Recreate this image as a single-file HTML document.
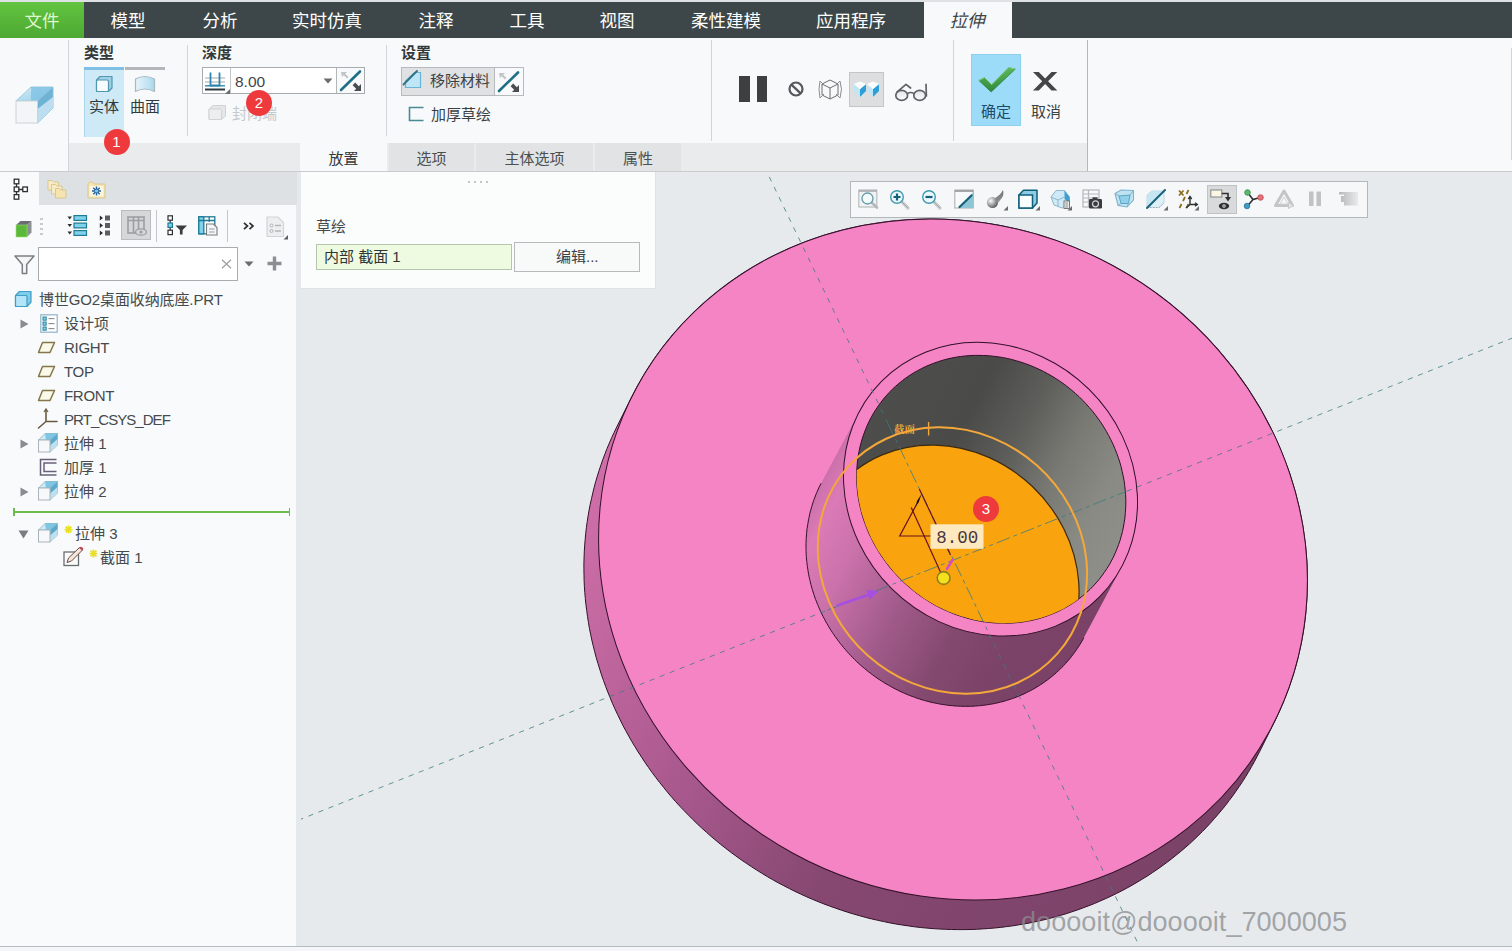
<!DOCTYPE html>
<html lang="zh-CN"><head><meta charset="utf-8"><title>拉伸</title>
<style>

html,body{margin:0;padding:0}
body{width:1512px;height:951px;position:relative;overflow:hidden;background:#f6f8f9;font-family:"Liberation Sans","Noto Sans CJK SC",sans-serif;color:#3f4547;font-size:15px}
.abs,.t,.i{position:absolute}
.t{white-space:nowrap;line-height:20px;height:20px}
#gfx{position:absolute;left:297px;top:172px;width:1215px;height:774px;background:#e7eaed}
#topstrip{left:0;top:0;width:1512px;height:2px;background:#dfe2e4}
#menubar{left:0;top:2px;width:1512px;height:36px;background:#3d4749}
#filetab{left:0;top:2px;width:84px;height:36px;background:linear-gradient(#62c440,#4da832)}
.mi{position:absolute;top:10.5px;height:20px;line-height:20px;font-size:17.5px;color:#fff;white-space:nowrap;transform:translateX(-50%)}
#acttab{left:924px;top:2px;width:88px;height:37px;background:#f7f9fa}
#ribbon{left:0;top:38px;width:1512px;height:134px;background:#f7f9fa}
#ribbonline{left:0;top:171px;width:1512px;height:1px;background:#c9cccd}
.vsep{position:absolute;width:1px;background:#d3d6d8}
#tabstrip{left:69px;top:143px;width:1018px;height:28px;background:#e9ebec}
.tab{position:absolute;top:143px;height:28px;background:#e1e3e4;font-size:15px;line-height:32px;text-align:center;color:#4a4f52}
.glabel{position:absolute;font-size:15px;font-weight:bold;color:#33393b;line-height:18px;white-space:nowrap}
.badge{position:absolute;width:26px;height:26px;border-radius:50%;background:#ee3a3c;color:#fff;font-size:15px;line-height:26px;text-align:center}

</style></head>
<body>
<div id="gfx"></div>
<svg id="scene" width="1212" height="774" viewBox="300 172 1212 774" style="position:absolute;left:300px;top:172px">
<defs>
<linearGradient id="gside" gradientUnits="userSpaceOnUse" x1="622" y1="417" x2="1254" y2="761"><stop offset="0" stop-color="#cf6fa9"/><stop offset="0.12" stop-color="#c2679f"/><stop offset="0.35" stop-color="#a4568a"/><stop offset="0.55" stop-color="#864871"/><stop offset="1" stop-color="#7b4267"/></linearGradient>
<linearGradient id="gtube" gradientUnits="userSpaceOnUse" x1="818" y1="486" x2="1088" y2="633"><stop offset="0" stop-color="#cb70aa"/><stop offset="0.07" stop-color="#db7ab6"/><stop offset="0.2" stop-color="#cb72ab"/><stop offset="0.42" stop-color="#a05a8a"/><stop offset="0.62" stop-color="#84496f"/><stop offset="0.8" stop-color="#7b4367"/><stop offset="1" stop-color="#7a4267"/></linearGradient>
<linearGradient id="ghole" gradientUnits="userSpaceOnUse" x1="868" y1="422" x2="1115" y2="557"><stop offset="0" stop-color="#4d4d4b"/><stop offset="0.3" stop-color="#4a4a48"/><stop offset="0.5" stop-color="#5e5e5b"/><stop offset="0.68" stop-color="#7a7a75"/><stop offset="0.85" stop-color="#8a8a84"/><stop offset="1" stop-color="#8f8f89"/></linearGradient>
<clipPath id="chole"><ellipse cx="991.2" cy="489.3" rx="140.6" ry="127.6" transform="rotate(43.57 991.2 489.3)" /></clipPath>
</defs>
<path d="M583.9,568.8 L583.9,562.9 L584.1,557.0 L584.3,551.1 L584.7,545.2 L585.2,539.3 L585.7,533.4 L586.4,527.6 L587.2,521.7 L588.1,515.9 L589.1,510.1 L590.2,504.4 L591.5,498.6 L592.8,492.9 L594.2,487.2 L595.7,481.6 L597.4,475.9 L599.1,470.4 L601.0,464.8 L602.9,459.3 L605.0,453.8 L607.1,448.4 L609.4,443.0 L611.7,437.6 L614.2,432.3 L616.7,427.1 L631.4,397.5 L634.1,392.3 L636.8,387.1 L639.7,382.0 L642.6,377.0 L645.6,372.0 L648.7,367.1 L652.0,362.2 L655.3,357.4 L658.7,352.6 L662.2,348.0 L665.7,343.3 L669.4,338.8 L673.2,334.3 L677.0,329.9 L680.9,325.5 L684.9,321.2 L689.0,317.0 L693.2,312.9 L697.4,308.8 L701.7,304.8 L706.2,300.9 L710.6,297.1 L715.2,293.4 L719.8,289.7 L724.5,286.1 L729.3,282.6 L734.1,279.2 L739.0,275.9 L743.9,272.6 L749.0,269.5 L754.1,266.4 L759.2,263.4 L764.4,260.5 L769.7,257.7 L775.0,255.0 L780.4,252.4 L785.8,249.9 L791.3,247.5 L796.8,245.1 L802.4,242.9 L808.0,240.8 L813.7,238.7 L819.4,236.8 L825.1,234.9 L830.9,233.2 L836.7,231.5 L842.6,230.0 L848.5,228.5 L854.4,227.2 L860.4,225.9 L866.4,224.8 L872.4,223.8 L878.4,222.8 L884.5,222.0 L890.6,221.2 L896.6,220.6 L902.8,220.1 L908.9,219.7 L915.0,219.3 L921.2,219.1 L927.4,219.0 L933.5,219.0 L939.7,219.1 L945.9,219.3 L952.1,219.6 L958.3,220.0 L964.4,220.5 L970.6,221.1 L976.8,221.8 L983.0,222.7 L989.1,223.6 L995.3,224.6 L1001.4,225.7 L1007.5,227.0 L1013.6,228.3 L1019.7,229.7 L1025.8,231.2 L1031.8,232.9 L1037.8,234.6 L1043.8,236.4 L1049.8,238.4 L1055.7,240.4 L1061.6,242.5 L1067.5,244.7 L1073.3,247.0 L1079.1,249.4 L1084.9,251.9 L1090.6,254.5 L1096.3,257.2 L1101.9,260.0 L1107.5,262.9 L1113.1,265.8 L1118.6,268.9 L1124.0,272.0 L1129.4,275.3 L1134.7,278.6 L1140.0,282.0 L1145.2,285.5 L1150.4,289.0 L1155.5,292.7 L1160.6,296.4 L1165.5,300.2 L1170.5,304.1 L1175.3,308.1 L1180.1,312.1 L1184.8,316.3 L1189.5,320.5 L1194.0,324.7 L1198.5,329.1 L1202.9,333.5 L1207.3,338.0 L1211.6,342.5 L1215.8,347.1 L1219.9,351.8 L1223.9,356.5 L1227.8,361.3 L1231.7,366.2 L1235.5,371.1 L1239.2,376.1 L1242.8,381.1 L1246.3,386.2 L1249.7,391.4 L1253.1,396.6 L1256.3,401.8 L1259.5,407.1 L1262.5,412.4 L1265.5,417.8 L1268.4,423.2 L1271.1,428.7 L1273.8,434.2 L1276.4,439.8 L1278.9,445.3 L1281.2,451.0 L1283.5,456.6 L1285.7,462.3 L1287.8,468.0 L1289.8,473.7 L1291.6,479.5 L1293.4,485.3 L1295.1,491.1 L1296.6,496.9 L1298.1,502.8 L1299.5,508.6 L1300.7,514.5 L1301.9,520.4 L1302.9,526.3 L1303.8,532.3 L1304.6,538.2 L1305.4,544.1 L1306.0,550.1 L1306.5,556.0 L1306.9,561.9 L1307.2,567.9 L1307.3,573.8 L1307.4,579.8 L1307.4,585.7 L1307.2,591.6 L1307.0,597.5 L1306.6,603.4 L1306.1,609.3 L1305.6,615.2 L1304.9,621.0 L1304.1,626.9 L1303.2,632.7 L1302.2,638.5 L1301.1,644.2 L1299.8,650.0 L1298.5,655.7 L1297.1,661.4 L1295.6,667.0 L1293.9,672.7 L1292.2,678.2 L1290.3,683.8 L1288.4,689.3 L1286.3,694.8 L1284.2,700.2 L1281.9,705.6 L1279.6,711.0 L1277.1,716.3 L1274.6,721.5 L1259.9,751.1 L1257.2,756.3 L1254.5,761.5 L1251.6,766.6 L1248.7,771.6 L1245.7,776.6 L1242.6,781.5 L1239.3,786.4 L1236.0,791.2 L1232.6,796.0 L1229.1,800.6 L1225.6,805.3 L1221.9,809.8 L1218.1,814.3 L1214.3,818.7 L1210.4,823.1 L1206.4,827.4 L1202.3,831.6 L1198.1,835.7 L1193.9,839.8 L1189.6,843.8 L1185.1,847.7 L1180.7,851.5 L1176.1,855.2 L1171.5,858.9 L1166.8,862.5 L1162.0,866.0 L1157.2,869.4 L1152.3,872.7 L1147.4,876.0 L1142.3,879.1 L1137.2,882.2 L1132.1,885.2 L1126.9,888.1 L1121.6,890.9 L1116.3,893.6 L1110.9,896.2 L1105.5,898.7 L1100.0,901.1 L1094.5,903.5 L1088.9,905.7 L1083.3,907.8 L1077.6,909.9 L1071.9,911.8 L1066.2,913.7 L1060.4,915.4 L1054.6,917.1 L1048.7,918.6 L1042.8,920.1 L1036.9,921.4 L1030.9,922.7 L1024.9,923.8 L1018.9,924.8 L1012.9,925.8 L1006.8,926.6 L1000.7,927.4 L994.7,928.0 L988.5,928.5 L982.4,928.9 L976.3,929.3 L970.1,929.5 L963.9,929.6 L957.8,929.6 L951.6,929.5 L945.4,929.3 L939.2,929.0 L933.0,928.6 L926.9,928.1 L920.7,927.5 L914.5,926.8 L908.3,925.9 L902.2,925.0 L896.0,924.0 L889.9,922.9 L883.8,921.6 L877.7,920.3 L871.6,918.9 L865.5,917.4 L859.5,915.7 L853.5,914.0 L847.5,912.2 L841.5,910.2 L835.6,908.2 L829.7,906.1 L823.8,903.9 L818.0,901.6 L812.2,899.2 L806.4,896.7 L800.7,894.1 L795.0,891.4 L789.4,888.6 L783.8,885.7 L778.2,882.8 L772.7,879.7 L767.3,876.6 L761.9,873.3 L756.6,870.0 L751.3,866.6 L746.1,863.1 L740.9,859.6 L735.8,855.9 L730.7,852.2 L725.8,848.4 L720.8,844.5 L716.0,840.5 L711.2,836.5 L706.5,832.3 L701.8,828.1 L697.3,823.9 L692.8,819.5 L688.4,815.1 L684.0,810.6 L679.7,806.1 L675.5,801.5 L671.4,796.8 L667.4,792.1 L663.5,787.3 L659.6,782.4 L655.8,777.5 L652.1,772.5 L648.5,767.5 L645.0,762.4 L641.6,757.2 L638.2,752.0 L635.0,746.8 L631.8,741.5 L628.8,736.2 L625.8,730.8 L622.9,725.4 L620.2,719.9 L617.5,714.4 L614.9,708.8 L612.4,703.3 L610.1,697.6 L607.8,692.0 L605.6,686.3 L603.5,680.6 L601.5,674.9 L599.7,669.1 L597.9,663.3 L596.2,657.5 L594.7,651.7 L593.2,645.8 L591.8,640.0 L590.6,634.1 L589.4,628.2 L588.4,622.3 L587.5,616.3 L586.7,610.4 L585.9,604.5 L585.3,598.5 L584.8,592.6 L584.4,586.7 L584.1,580.7 L584.0,574.8Z" fill="url(#gside)" stroke="#33102a" stroke-width="1"/>
<ellipse cx="953.0" cy="559.5" rx="360.1" ry="334.5" transform="rotate(28.59 953.0 559.5)" fill="#f584c4" stroke="#33102a" stroke-width="1"/>
<path d="M806.0,546.2 L806.0,543.6 L806.1,541.1 L806.2,538.5 L806.4,536.0 L806.6,533.5 L806.8,531.0 L807.1,528.4 L807.5,525.9 L807.9,523.5 L808.3,521.0 L808.8,518.5 L809.3,516.1 L809.8,513.6 L810.4,511.2 L811.1,508.8 L811.8,506.4 L812.5,504.0 L813.3,501.6 L814.1,499.3 L815.0,497.0 L815.9,494.6 L816.8,492.4 L817.8,490.1 L818.8,487.8 L819.9,485.6 L821.0,483.4 L822.2,481.2 L859.7,410.9 L860.9,408.8 L862.1,406.6 L863.4,404.5 L864.7,402.5 L866.0,400.4 L867.4,398.4 L868.8,396.4 L870.3,394.4 L871.8,392.5 L873.3,390.5 L874.9,388.7 L876.5,386.8 L878.1,385.0 L879.8,383.2 L881.5,381.4 L883.2,379.7 L885.0,378.0 L886.8,376.4 L888.6,374.7 L890.5,373.2 L892.4,371.6 L894.3,370.1 L896.3,368.6 L898.3,367.2 L900.3,365.8 L902.3,364.4 L904.4,363.1 L906.5,361.8 L908.6,360.5 L910.7,359.3 L912.9,358.1 L915.1,357.0 L917.3,355.9 L919.5,354.8 L921.8,353.8 L924.1,352.8 L926.4,351.9 L928.7,351.0 L931.0,350.2 L933.4,349.4 L935.8,348.6 L938.1,347.9 L940.5,347.2 L943.0,346.6 L945.4,346.0 L947.8,345.4 L950.3,344.9 L952.8,344.5 L955.3,344.1 L957.8,343.7 L960.3,343.4 L962.8,343.1 L965.3,342.9 L967.8,342.7 L970.4,342.5 L972.9,342.4 L975.5,342.4 L978.0,342.4 L980.6,342.4 L983.1,342.5 L985.7,342.6 L988.3,342.7 L990.8,343.0 L993.4,343.2 L996.0,343.5 L998.5,343.9 L1001.1,344.2 L1003.7,344.7 L1006.2,345.2 L1008.8,345.7 L1011.3,346.2 L1013.8,346.8 L1016.4,347.5 L1018.9,348.2 L1021.4,348.9 L1023.9,349.7 L1026.4,350.5 L1028.9,351.4 L1031.3,352.3 L1033.8,353.2 L1036.3,354.2 L1038.7,355.3 L1041.1,356.3 L1043.5,357.4 L1045.9,358.6 L1048.3,359.8 L1050.6,361.0 L1052.9,362.3 L1055.2,363.6 L1057.5,364.9 L1059.8,366.3 L1062.1,367.8 L1064.3,369.2 L1066.5,370.7 L1068.7,372.2 L1070.8,373.8 L1073.0,375.4 L1075.1,377.0 L1077.2,378.7 L1079.2,380.4 L1081.3,382.2 L1083.3,383.9 L1085.3,385.7 L1087.2,387.6 L1089.1,389.4 L1091.0,391.3 L1092.9,393.3 L1094.7,395.2 L1096.5,397.2 L1098.2,399.2 L1100.0,401.2 L1101.7,403.3 L1103.3,405.4 L1105.0,407.5 L1106.5,409.7 L1108.1,411.8 L1109.6,414.0 L1111.1,416.2 L1112.6,418.5 L1114.0,420.7 L1115.3,423.0 L1116.7,425.3 L1118.0,427.6 L1119.2,430.0 L1120.5,432.3 L1121.6,434.7 L1122.8,437.1 L1123.9,439.5 L1124.9,441.9 L1125.9,444.3 L1126.9,446.8 L1127.9,449.2 L1128.8,451.7 L1129.6,454.2 L1130.4,456.7 L1131.2,459.2 L1131.9,461.7 L1132.6,464.2 L1133.2,466.8 L1133.8,469.3 L1134.4,471.8 L1134.9,474.4 L1135.3,476.9 L1135.7,479.5 L1136.1,482.0 L1136.4,484.6 L1136.7,487.2 L1137.0,489.7 L1137.2,492.3 L1137.3,494.9 L1137.4,497.4 L1137.5,500.0 L1137.5,502.5 L1137.5,505.1 L1137.4,507.6 L1137.3,510.2 L1137.1,512.7 L1136.9,515.2 L1136.7,517.7 L1136.4,520.3 L1136.0,522.8 L1135.6,525.2 L1135.2,527.7 L1134.7,530.2 L1134.2,532.6 L1133.7,535.1 L1133.1,537.5 L1132.4,539.9 L1131.7,542.3 L1131.0,544.7 L1130.2,547.1 L1129.4,549.4 L1128.5,551.7 L1127.6,554.1 L1126.7,556.3 L1125.7,558.6 L1124.7,560.9 L1123.6,563.1 L1122.5,565.3 L1121.3,567.5 L1083.8,637.8 L1082.6,639.9 L1081.4,642.1 L1080.1,644.2 L1078.8,646.2 L1077.5,648.3 L1076.1,650.3 L1074.7,652.3 L1073.2,654.3 L1071.7,656.2 L1070.2,658.2 L1068.6,660.0 L1067.0,661.9 L1065.4,663.7 L1063.7,665.5 L1062.0,667.3 L1060.3,669.0 L1058.5,670.7 L1056.7,672.3 L1054.9,674.0 L1053.0,675.5 L1051.1,677.1 L1049.2,678.6 L1047.2,680.1 L1045.2,681.5 L1043.2,682.9 L1041.2,684.3 L1039.1,685.6 L1037.0,686.9 L1034.9,688.2 L1032.8,689.4 L1030.6,690.6 L1028.4,691.7 L1026.2,692.8 L1024.0,693.9 L1021.7,694.9 L1019.4,695.9 L1017.1,696.8 L1014.8,697.7 L1012.5,698.5 L1010.1,699.3 L1007.7,700.1 L1005.4,700.8 L1003.0,701.5 L1000.5,702.1 L998.1,702.7 L995.7,703.3 L993.2,703.8 L990.7,704.2 L988.2,704.6 L985.7,705.0 L983.2,705.3 L980.7,705.6 L978.2,705.8 L975.7,706.0 L973.1,706.2 L970.6,706.3 L968.0,706.3 L965.5,706.3 L962.9,706.3 L960.4,706.2 L957.8,706.1 L955.2,706.0 L952.7,705.7 L950.1,705.5 L947.5,705.2 L945.0,704.8 L942.4,704.5 L939.8,704.0 L937.3,703.5 L934.7,703.0 L932.2,702.5 L929.7,701.9 L927.1,701.2 L924.6,700.5 L922.1,699.8 L919.6,699.0 L917.1,698.2 L914.6,697.3 L912.2,696.4 L909.7,695.5 L907.2,694.5 L904.8,693.4 L902.4,692.4 L900.0,691.3 L897.6,690.1 L895.2,688.9 L892.9,687.7 L890.6,686.4 L888.3,685.1 L886.0,683.8 L883.7,682.4 L881.4,680.9 L879.2,679.5 L877.0,678.0 L874.8,676.5 L872.7,674.9 L870.5,673.3 L868.4,671.7 L866.3,670.0 L864.3,668.3 L862.2,666.5 L860.2,664.8 L858.2,663.0 L856.3,661.1 L854.4,659.3 L852.5,657.4 L850.6,655.4 L848.8,653.5 L847.0,651.5 L845.3,649.5 L843.5,647.5 L841.8,645.4 L840.2,643.3 L838.5,641.2 L837.0,639.0 L835.4,636.9 L833.9,634.7 L832.4,632.5 L830.9,630.2 L829.5,628.0 L828.2,625.7 L826.8,623.4 L825.5,621.1 L824.3,618.7 L823.0,616.4 L821.9,614.0 L820.7,611.6 L819.6,609.2 L818.6,606.8 L817.6,604.4 L816.6,601.9 L815.6,599.5 L814.7,597.0 L813.9,594.5 L813.1,592.0 L812.3,589.5 L811.6,587.0 L810.9,584.5 L810.3,581.9 L809.7,579.4 L809.1,576.9 L808.6,574.3 L808.2,571.8 L807.8,569.2 L807.4,566.7 L807.1,564.1 L806.8,561.5 L806.5,559.0 L806.3,556.4 L806.2,553.8 L806.1,551.3 L806.0,548.7Z" fill="url(#gtube)"/>
<path d="M1083.8,637.8 L1082.6,639.9 L1081.4,642.1 L1080.1,644.2 L1078.8,646.2 L1077.5,648.3 L1076.1,650.3 L1074.7,652.3 L1073.2,654.3 L1071.7,656.2 L1070.2,658.2 L1068.6,660.0 L1067.0,661.9 L1065.4,663.7 L1063.7,665.5 L1062.0,667.3 L1060.3,669.0 L1058.5,670.7 L1056.7,672.3 L1054.9,674.0 L1053.0,675.5 L1051.1,677.1 L1049.2,678.6 L1047.2,680.1 L1045.2,681.5 L1043.2,682.9 L1041.2,684.3 L1039.1,685.6 L1037.0,686.9 L1034.9,688.2 L1032.8,689.4 L1030.6,690.6 L1028.4,691.7 L1026.2,692.8 L1024.0,693.9 L1021.7,694.9 L1019.4,695.9 L1017.1,696.8 L1014.8,697.7 L1012.5,698.5 L1010.1,699.3 L1007.7,700.1 L1005.4,700.8 L1003.0,701.5 L1000.5,702.1 L998.1,702.7 L995.7,703.3 L993.2,703.8 L990.7,704.2 L988.2,704.6 L985.7,705.0 L983.2,705.3 L980.7,705.6 L978.2,705.8 L975.7,706.0 L973.1,706.2 L970.6,706.3 L968.0,706.3 L965.5,706.3 L962.9,706.3 L960.4,706.2 L957.8,706.1 L955.2,706.0 L952.7,705.7 L950.1,705.5 L947.5,705.2 L945.0,704.8 L942.4,704.5 L939.8,704.0 L937.3,703.5 L934.7,703.0 L932.2,702.5 L929.7,701.9 L927.1,701.2 L924.6,700.5 L922.1,699.8 L919.6,699.0 L917.1,698.2 L914.6,697.3 L912.2,696.4 L909.7,695.5 L907.2,694.5 L904.8,693.4 L902.4,692.4 L900.0,691.3 L897.6,690.1 L895.2,688.9 L892.9,687.7 L890.6,686.4 L888.3,685.1 L886.0,683.8 L883.7,682.4 L881.4,680.9 L879.2,679.5 L877.0,678.0 L874.8,676.5 L872.7,674.9 L870.5,673.3 L868.4,671.7 L866.3,670.0 L864.3,668.3 L862.2,666.5 L860.2,664.8 L858.2,663.0 L856.3,661.1 L854.4,659.3 L852.5,657.4 L850.6,655.4 L848.8,653.5 L847.0,651.5 L845.3,649.5 L843.5,647.5 L841.8,645.4 L840.2,643.3 L838.5,641.2 L837.0,639.0 L835.4,636.9 L833.9,634.7 L832.4,632.5 L830.9,630.2 L829.5,628.0 L828.2,625.7 L826.8,623.4 L825.5,621.1 L824.3,618.7 L823.0,616.4 L821.9,614.0 L820.7,611.6 L819.6,609.2 L818.6,606.8 L817.6,604.4 L816.6,601.9 L815.6,599.5 L814.7,597.0 L813.9,594.5 L813.1,592.0 L812.3,589.5 L811.6,587.0 L810.9,584.5 L810.3,581.9 L809.7,579.4 L809.1,576.9 L808.6,574.3 L808.2,571.8 L807.8,569.2 L807.4,566.7 L807.1,564.1 L806.8,561.5 L806.5,559.0 L806.3,556.4 L806.2,553.8 L806.1,551.3 L806.0,548.7 L806.0,546.2 L806.0,543.6 L806.1,541.1 L806.2,538.5 L806.4,536.0 L806.6,533.5 L806.8,531.0 L807.1,528.4 L807.5,525.9 L807.9,523.5 L808.3,521.0 L808.8,518.5 L809.3,516.1 L809.8,513.6 L810.4,511.2 L811.1,508.8 L811.8,506.4 L812.5,504.0 L813.3,501.6 L814.1,499.3 L815.0,497.0 L815.9,494.6 L816.8,492.4 L817.8,490.1 L818.8,487.8 L819.9,485.6 L821.0,483.4" fill="none" stroke="#33102a" stroke-width="1"/>
<ellipse cx="990.5" cy="489.2" rx="153.3" ry="140.3" transform="rotate(44.67 990.5 489.2)" fill="#f584c4" stroke="#33102a" stroke-width="1"/>
<path d="M1093.1,586.2 L1090.0,589.4 L1086.7,592.4 L1083.3,595.3 L1079.9,598.1 L1076.3,600.8 L1072.6,603.3 L1068.8,605.7 L1064.9,607.9 L1060.9,610.0 L1056.9,612.0 L1052.7,613.8 L1048.5,615.4 L1044.2,616.9 L1039.9,618.3 L1035.5,619.5 L1031.0,620.5 L1026.5,621.4 L1021.9,622.1 L1017.3,622.6 L1012.7,623.0 L1008.1,623.2 L1003.4,623.2 L998.7,623.1 L994.0,622.9 L989.3,622.4 L984.6,621.8 L979.9,621.1 L975.3,620.2 L970.6,619.1 L966.0,617.8 L961.4,616.4 L956.8,614.9 L952.3,613.2 L947.8,611.3 L943.4,609.3 L939.0,607.2 L934.7,604.9 L930.5,602.5 L926.4,599.9 L922.3,597.2 L918.3,594.4 L914.4,591.4 L910.6,588.3 L906.9,585.1 L903.2,581.8 L899.7,578.3 L896.4,574.8 L893.1,571.1 L889.9,567.4 L886.9,563.5 L884.0,559.6 L881.2,555.6 L878.6,551.5 L876.1,547.3 L873.7,543.0 L871.5,538.7 L869.4,534.4 L867.5,529.9 L865.7,525.4 L864.1,520.9 L862.6,516.4 L861.3,511.8 L860.2,507.1 L859.2,502.5 L858.3,497.8 L857.7,493.2 L857.2,488.5 L856.8,483.8 L856.6,479.2 L856.6,474.5 L856.8,469.9 L857.1,465.2 L857.5,460.7 L858.2,456.1 L859.0,451.6 L859.9,447.1 L861.1,442.7 L862.3,438.4 L863.8,434.1 L865.4,429.9 L867.1,425.7 L869.0,421.6 L871.1,417.6 L873.2,413.7 L875.6,409.9 L878.1,406.2 L880.7,402.6 L883.4,399.1 L886.3,395.7 L889.3,392.4 L892.4,389.2 L895.7,386.2 L899.1,383.3 L902.5,380.5 L906.1,377.8 L909.8,375.3 L913.6,372.9 L917.5,370.7 L921.5,368.6 L925.5,366.6 L929.7,364.8 L933.9,363.2 L938.2,361.7 L942.5,360.3 L946.9,359.1 L951.4,358.1 L955.9,357.2 L960.5,356.5 L965.1,356.0 L969.7,355.6 L974.3,355.4 L979.0,355.4 L983.7,355.5 L988.4,355.7 L993.1,356.2 L997.8,356.8 L1002.5,357.5 L1007.1,358.4 L1011.8,359.5 L1016.4,360.8 L1021.0,362.2 L1025.6,363.7 L1030.1,365.4 L1034.6,367.3 L1039.0,369.3 L1043.4,371.4 L1047.7,373.7 L1051.9,376.1 L1056.0,378.7 L1060.1,381.4 L1064.1,384.2 L1068.0,387.2 L1071.8,390.3 L1075.5,393.5 L1079.2,396.8 L1082.7,400.3 L1086.0,403.8 L1089.3,407.5 L1092.5,411.2 L1095.5,415.1 L1098.4,419.0 L1101.2,423.0 L1103.8,427.1 L1106.3,431.3 L1108.7,435.6 L1110.9,439.9 L1113.0,444.2 L1114.9,448.7 L1116.7,453.2 L1118.3,457.7 L1119.8,462.2 L1121.1,466.8 L1122.2,471.5 L1123.2,476.1 L1124.1,480.8 L1124.7,485.4 L1125.2,490.1 L1125.6,494.8 L1125.8,499.4 L1125.8,504.1 L1125.6,508.7 L1125.3,513.4 L1124.9,517.9 L1124.2,522.5 L1123.4,527.0 L1122.5,531.5 L1121.3,535.9 L1120.1,540.2 L1118.6,544.5 L1117.0,548.7 L1115.3,552.9 L1113.4,557.0 L1111.3,561.0 L1109.2,564.9 L1106.8,568.7 L1104.3,572.4 L1101.7,576.0 L1099.0,579.5 L1096.1,582.9Z" fill="url(#ghole)" stroke="#33102a" stroke-width="1"/>
<g clip-path="url(#chole)"><ellipse cx="944.5" cy="579.0" rx="140.6" ry="127.6" transform="rotate(43.57 944.5 579.0)" fill="#f9a40e" stroke="#3a2a10" stroke-width="1.2"/></g>
<g stroke="#3d7c80" stroke-width="1" fill="none" opacity="0.8"><line x1="769.3" y1="176.9" x2="887.7" y2="423" stroke-dasharray="5 6.2"/><line x1="989.2" y1="634" x2="1138.3" y2="944" stroke-dasharray="5 6.2"/><line x1="298.3" y1="820.2" x2="827.5" y2="610.1" stroke-dasharray="5.2 5.6"/><line x1="1126.8" y1="491.2" x2="1512" y2="338.2" stroke-dasharray="5.2 5.6"/><line x1="887.7" y1="423" x2="989.2" y2="634" stroke-dasharray="14 4 4 4"/><line x1="827.5" y1="610.1" x2="1126.8" y2="491.2" stroke-dasharray="14 4 4 4"/></g>
<ellipse cx="952.4" cy="560.5" rx="140.3" ry="127.2" transform="rotate(41.71 952.4 560.5)" fill="none" stroke="#f5a83a" stroke-width="2"/>

<text x="894" y="432.5" font-family="'Liberation Serif','Noto Serif CJK SC',serif" font-size="10.5" font-weight="bold" fill="#f2a93b">截面</text>
<line x1="928.6" y1="422" x2="928.6" y2="435.5" stroke="#f2a93b" stroke-width="1.4"/>
<g stroke="#6a1020" stroke-width="1.2" fill="none">
<line x1="919.3" y1="489" x2="950.5" y2="555"/>
<line x1="911.2" y1="507.5" x2="940.6" y2="572.3"/>
<path d="M916.5 504.5 L899.7 536 H931"/>
</g>
<path d="M921.6 494 L918.6 502.5 L915.6 506.5 L917 501 Z" fill="#1a0a10"/>
<line x1="947" y1="568.8" x2="952.8" y2="559.5" stroke="#d24fc4" stroke-width="2.6" stroke-linecap="round"/>
<circle cx="943.6" cy="578" r="6.4" fill="#f4e11e" stroke="#8f7f1c" stroke-width="1.6"/>
<rect x="930.5" y="524.3" width="53" height="24.5" fill="#fde9bd"/>
<text x="936.3" y="543" font-family="'Liberation Mono',monospace" font-size="17.5" fill="#4a3540" textLength="42" lengthAdjust="spacing">8.00</text>
<circle cx="986" cy="509" r="13" fill="#ee3a3c"/>
<text x="986" y="514.3" text-anchor="middle" font-family="'Liberation Sans',sans-serif" font-size="15" fill="#fff">3</text>
<line x1="838" y1="605.3" x2="868" y2="595" stroke="#a64fe0" stroke-width="2.6" stroke-linecap="round"/>
<polygon points="878.5,591.3 866.3,589.8 869.6,600" fill="#a64fe0"/>
<text x="1021" y="931" font-family="'Liberation Sans',sans-serif" font-size="28" fill="#8a8d90" fill-opacity="0.75" textLength="326" lengthAdjust="spacingAndGlyphs">dooooit@dooooit_7000005</text>

</svg>
<div class="abs" style="left:0;top:172px;width:297px;height:774px;background:#f8fafb"></div><div class="abs" style="left:296px;top:172px;width:5px;height:774px;background:#e6e9eb"></div><div class="abs" style="left:39px;top:172px;width:258px;height:33px;background:#dde1e3"></div><svg class="i" style="left:13px;top:178px" width="16" height="23" viewBox="0 0 16 23"><g fill="#fff" stroke="#2e3032" stroke-width="1.3"><path d="M3.5 5 V18 M3.5 11.5 H10" fill="none"/><rect x="1.2" y="1.2" width="4.6" height="4.6"/><rect x="1.2" y="9" width="4.6" height="4.6"/><rect x="1.2" y="16.6" width="4.6" height="4.6"/><rect x="9.8" y="9" width="4.6" height="4.6"/></g></svg><svg class="i" style="left:47px;top:178px" width="21" height="22" viewBox="0 0 21 22"><g stroke="#d9c48c" stroke-width="0.9"><path d="M1 2.5 h4 l1.5 1.5 h5 v8 h-10.5z" fill="#f7ebc6"/><path d="M4.5 6.5 h4 l1.5 1.5 h5 v8 h-10.5z" fill="#f7ebc6"/><path d="M8.5 10.5 h4 l1.5 1.5 h5 v8 h-10.5z" fill="#f5e4b2"/></g></svg><svg class="i" style="left:87px;top:180px" width="20" height="20" viewBox="0 0 20 20"><path d="M1 3.5 q2 -3 5 -1 l1.5 1.5 h10.5 v14 h-17z" fill="#f5e4b2" stroke="#d9c48c" stroke-width="0.9"/><rect x="2.5" y="6" width="14" height="10.5" fill="#fbf6e4"/><g stroke="#1f5f9a" stroke-width="1.4"><path d="M9.5 6.5 v9 M5 11 h9 M6.3 7.8 l6.4 6.4 M12.7 7.8 l-6.4 6.4"/></g><circle cx="9.5" cy="11" r="1.6" fill="#7fc8f0"/></svg><svg class="i" style="left:14.5px;top:219.5px" width="18" height="18" viewBox="0 0 18 18"><polygon points="1,5 5.5,1 16.5,1 12,5" fill="#6a6d6f"/><polygon points="12,5 16.5,1 16.5,12.5 12,17" fill="#8d9092"/><rect x="1" y="5" width="11" height="12" fill="#5cb83a" stroke="#9fe07a" stroke-width="0.6"/></svg><div class="abs" style="left:40px;top:217.5px;width:3px;height:2.5px;background:#c8cbcd"></div><div class="abs" style="left:40px;top:222.5px;width:3px;height:2.5px;background:#c8cbcd"></div><div class="abs" style="left:40px;top:227.5px;width:3px;height:2.5px;background:#c8cbcd"></div><div class="abs" style="left:40px;top:232.5px;width:3px;height:2.5px;background:#c8cbcd"></div><svg class="i" style="left:66.5px;top:214.5px" width="21" height="21" viewBox="0 0 21 21"><polygon points="0.5,1.5 5,1.5 2.75,4.5" fill="#2a2c2e"/><rect x="7" y="0.6" width="12.5" height="4.8" fill="#7fd2ea" stroke="#1f7a94" stroke-width="1.2"/><polygon points="0.5,9.0 5,9.0 2.75,12.0" fill="#2a2c2e"/><rect x="7" y="8.1" width="12.5" height="4.8" fill="#7fd2ea" stroke="#1f7a94" stroke-width="1.2"/><polygon points="0.5,16.5 5,16.5 2.75,19.5" fill="#2a2c2e"/><rect x="7" y="15.6" width="12.5" height="4.8" fill="#7fd2ea" stroke="#1f7a94" stroke-width="1.2"/></svg><svg class="i" style="left:99px;top:214.5px" width="12" height="21" viewBox="0 0 12 21"><polygon points="0.8,0.5 4,3 0.8,5.5" fill="#2a2c2e"/><rect x="6" y="0.5" width="5" height="5" fill="#5c5f61"/><polygon points="0.8,8.0 4,10.5 0.8,13.0" fill="#2a2c2e"/><rect x="6" y="8.0" width="5" height="5" fill="#5c5f61"/><polygon points="0.8,15.5 4,18 0.8,20.5" fill="#2a2c2e"/><rect x="6" y="15.5" width="5" height="5" fill="#5c5f61"/></svg><div class="abs" style="left:121px;top:210px;width:30px;height:30px;background:#d5d7d8;border:1px solid #babcbd;box-sizing:border-box"></div><svg class="i" style="left:126.5px;top:216px" width="21" height="20" viewBox="0 0 21 20"><g fill="none" stroke="#9c9fa1" stroke-width="1.6"><rect x="1" y="1" width="16" height="16"/><path d="M6.5 1 V17 M11.5 1 V17 M1 4.5 H17"/></g><ellipse cx="14" cy="16" rx="5.5" ry="3.2" fill="#d5d7d8" stroke="#9c9fa1" stroke-width="1.3"/><circle cx="14" cy="16" r="1.6" fill="#9c9fa1"/></svg><div class="abs" style="left:156px;top:210px;width:1px;height:32px;background:#c3c6c8"></div><svg class="i" style="left:167px;top:214.5px" width="21" height="21" viewBox="0 0 21 21"><g fill="#fff" stroke="#2e3032" stroke-width="1.2"><path d="M3.2 4 V17" fill="none"/><rect x="1" y="0.8" width="4.4" height="4.4"/><rect x="1" y="8" width="4.4" height="4.4" fill="#7fd2ea" stroke="#1f7a94"/><rect x="1" y="15.2" width="4.4" height="4.4"/></g><path d="M8.5 10.5 H20 L15.6 15 V19.5 H12.9 V15 Z" fill="#3a3c3e"/></svg><svg class="i" style="left:197.5px;top:215.5px" width="21" height="21" viewBox="0 0 21 21"><rect x="0.8" y="0.8" width="16" height="17" fill="#fff" stroke="#1f7a94" stroke-width="1.3"/><rect x="0.8" y="0.8" width="5" height="17" fill="#7fd2ea" stroke="#1f7a94" stroke-width="1.3"/><path d="M0.8 4.5 H16.8 M11.2 0.8 V6" stroke="#1f7a94" stroke-width="1.3"/><path d="M8.5 8 h7 l3.5 3.5 v7.5 h-10.5z" fill="#f4f5f6" stroke="#7a7d7f" stroke-width="1.1"/><path d="M11 13 h5.5 M11 16 h5.5" stroke="#9a9d9f" stroke-width="1"/></svg><div class="abs" style="left:227px;top:210px;width:1px;height:32px;background:#c3c6c8"></div><svg class="i" style="left:242.5px;top:222px" width="12" height="8" viewBox="0 0 12 8"><path d="M1 0.8 L4.5 4 L1 7.2 M6.5 0.8 L10 4 L6.5 7.2" fill="none" stroke="#2e3032" stroke-width="1.7"/></svg><svg class="i" style="left:265.5px;top:215.5px" width="23" height="24" viewBox="0 0 23 24"><path d="M1 1 h11 l5.5 5.5 v14 h-16.5z" fill="#eceeef" stroke="#d2d5d7" stroke-width="1.2"/><circle cx="5.5" cy="9.5" r="1.5" fill="none" stroke="#b4b7b9"/><circle cx="5.5" cy="15" r="1.5" fill="none" stroke="#b4b7b9"/><path d="M9 9.5 h6 M9 15 h6" stroke="#b4b7b9" stroke-width="1.3"/><polygon points="22,19 22,23.5 17.5,23.5" fill="#5c5f61"/></svg><svg class="i" style="left:13.5px;top:254.5px" width="21" height="20" viewBox="0 0 21 20"><path d="M1 1 H20 L12.7 9.5 V18.5 H8.3 V9.5 Z" fill="#f4f5f6" stroke="#7c7f81" stroke-width="1.5" stroke-linejoin="round"/></svg><div class="abs" style="left:38px;top:247px;width:200px;height:34px;background:#fff;border:1px solid #a9acae;box-sizing:border-box"></div><svg class="i" style="left:221px;top:259px" width="11" height="10" viewBox="0 0 11 10"><path d="M1 0.8 L10 9.2 M10 0.8 L1 9.2" stroke="#9c9fa1" stroke-width="1.2"/></svg><svg class="i" style="left:244px;top:260.5px" width="10" height="6" viewBox="0 0 10 6"><polygon points="0.5,0.5 9.5,0.5 5,5.5" fill="#6a6d6f"/></svg><svg class="i" style="left:267px;top:256px" width="15" height="15" viewBox="0 0 15 15"><path d="M7.5 0.5 V14.5 M0.5 7.5 H14.5" stroke="#8c8f91" stroke-width="3.4"/></svg><svg class="i" style="left:13.5px;top:290px" width="19" height="18" viewBox="0 0 19 18"><polygon points="1.5,5.5 5.5,1.5 17,1.5 17,12 13,16.5 1.5,16.5" fill="#7fcdea" stroke="#3f9fc4" stroke-width="1.2" stroke-linejoin="round"/><rect x="1.5" y="5.5" width="11.5" height="11" rx="1" fill="#b4e4f7" stroke="#3f9fc4" stroke-width="1.2"/></svg><div class="t" style="left:39px;top:289.8px;font-size:15px;color:#454a4d;letter-spacing:-0.12px">博世GO2桌面收纳底座.PRT</div><svg class="i" style="left:20px;top:318.5px" width="9" height="10" viewBox="0 0 9 10"><polygon points="0.5,0.5 8.5,5 0.5,9.5" fill="#8a8d8f"/></svg><svg class="i" style="left:39.5px;top:314px" width="18" height="19" viewBox="0 0 18 19"><rect x="0.8" y="0.8" width="16.4" height="17.4" fill="#fff" stroke="#8fb4c8" stroke-width="1.2"/><rect x="3" y="3" width="3.2" height="3.2" fill="#7fd2ea" stroke="#1f7a94" stroke-width="0.9"/><path d="M8.5 4.6 h6" stroke="#8a8d8f" stroke-width="1.1"/><rect x="3" y="8" width="3.2" height="3.2" fill="#7fd2ea" stroke="#1f7a94" stroke-width="0.9"/><path d="M8.5 9.6 h6" stroke="#8a8d8f" stroke-width="1.1"/><rect x="3" y="13" width="3.2" height="3.2" fill="#7fd2ea" stroke="#1f7a94" stroke-width="0.9"/><path d="M8.5 14.6 h6" stroke="#8a8d8f" stroke-width="1.1"/></svg><div class="t" style="left:64px;top:313.8px;font-size:15px;color:#454a4d">设计项</div><svg class="i" style="left:36.8px;top:340.5px" width="19" height="13" viewBox="0 0 19 13"><polygon points="5.5,1.5 17.5,1.5 13,11.5 1.5,11.5" fill="#faf8ea" stroke="#857548" stroke-width="1.5" stroke-linejoin="round"/></svg><div class="t" style="left:64px;top:338px;font-size:15px;color:#454a4d;letter-spacing:-0.3px">RIGHT</div><svg class="i" style="left:36.8px;top:364.5px" width="19" height="13" viewBox="0 0 19 13"><polygon points="5.5,1.5 17.5,1.5 13,11.5 1.5,11.5" fill="#faf8ea" stroke="#857548" stroke-width="1.5" stroke-linejoin="round"/></svg><div class="t" style="left:64px;top:362px;font-size:15px;color:#454a4d;letter-spacing:-0.3px">TOP</div><svg class="i" style="left:36.8px;top:388.5px" width="19" height="13" viewBox="0 0 19 13"><polygon points="5.5,1.5 17.5,1.5 13,11.5 1.5,11.5" fill="#faf8ea" stroke="#857548" stroke-width="1.5" stroke-linejoin="round"/></svg><div class="t" style="left:64px;top:386px;font-size:15px;color:#454a4d;letter-spacing:-0.3px">FRONT</div><svg class="i" style="left:37px;top:408px" width="22" height="22" viewBox="0 0 22 22"><path d="M9 1.5 V13.5 L1.5 20 M9 13.5 H20" fill="none" stroke="#6a5a40" stroke-width="1.6" stroke-linecap="round"/><path d="M7 4 L9 1 L11 4" fill="none" stroke="#6a5a40" stroke-width="1.2"/></svg><div class="t" style="left:64px;top:410px;font-size:15px;color:#454a4d;letter-spacing:-0.95px">PRT_CSYS_DEF</div><svg class="i" style="left:20px;top:438.5px" width="9" height="10" viewBox="0 0 9 10"><polygon points="0.5,0.5 8.5,5 0.5,9.5" fill="#8a8d8f"/></svg><svg class="i" style="left:37px;top:432px" width="22" height="22" viewBox="0 0 22 22"><polygon points="1.5,8 8,1.5 20.5,1.5 13,8" fill="#cfeaf6" stroke="#8fb9c8" stroke-width="0.9"/><polygon points="8,1.5 20.5,1.5 20.5,10 13,8 9,8" fill="#6fbfe0" opacity="0.85"/><polygon points="13,8 20.5,1.5 20.5,13 13,20" fill="#5aa9cc" stroke="#8fb9c8" stroke-width="0.9"/><polygon points="13,13.5 20.5,7 20.5,13 13,20" fill="#cfeaf6" opacity="0.85"/><rect x="1.5" y="8" width="11.5" height="12" fill="#f7f8f9" stroke="#a9b4ba" stroke-width="1"/></svg><div class="t" style="left:64px;top:434px;font-size:15px;color:#454a4d">拉伸 1</div><svg class="i" style="left:38.5px;top:457.5px" width="19" height="19" viewBox="0 0 19 19"><path d="M17.5 1.5 H1.5 V17 H17.5 M17.5 5 H5 V13.5 H17.5" fill="none" stroke="#6a5f78" stroke-width="1.5"/></svg><div class="t" style="left:64px;top:458px;font-size:15px;color:#454a4d">加厚 1</div><svg class="i" style="left:20px;top:486.5px" width="9" height="10" viewBox="0 0 9 10"><polygon points="0.5,0.5 8.5,5 0.5,9.5" fill="#8a8d8f"/></svg><svg class="i" style="left:37px;top:480px" width="22" height="22" viewBox="0 0 22 22"><polygon points="1.5,8 8,1.5 20.5,1.5 13,8" fill="#cfeaf6" stroke="#8fb9c8" stroke-width="0.9"/><polygon points="8,1.5 20.5,1.5 20.5,10 13,8 9,8" fill="#6fbfe0" opacity="0.85"/><polygon points="13,8 20.5,1.5 20.5,13 13,20" fill="#5aa9cc" stroke="#8fb9c8" stroke-width="0.9"/><polygon points="13,13.5 20.5,7 20.5,13 13,20" fill="#cfeaf6" opacity="0.85"/><rect x="1.5" y="8" width="11.5" height="12" fill="#f7f8f9" stroke="#a9b4ba" stroke-width="1"/></svg><div class="t" style="left:64px;top:482px;font-size:15px;color:#454a4d">拉伸 2</div><div class="abs" style="left:13px;top:511px;width:277px;height:1.6px;background:#6fba4c"></div><div class="abs" style="left:13px;top:508px;width:1.5px;height:8px;background:#6fba4c"></div><div class="abs" style="left:288.5px;top:508px;width:1.5px;height:8px;background:#6fba4c"></div><svg class="i" style="left:17.5px;top:529.5px" width="11" height="9" viewBox="0 0 11 9"><polygon points="0.5,0.5 10.5,0.5 5.5,8.5" fill="#7a7d7f"/></svg><svg class="i" style="left:37px;top:522px" width="22" height="22" viewBox="0 0 22 22"><polygon points="1.5,8 8,1.5 20.5,1.5 13,8" fill="#cfeaf6" stroke="#8fb9c8" stroke-width="0.9"/><polygon points="8,1.5 20.5,1.5 20.5,10 13,8 9,8" fill="#6fbfe0" opacity="0.85"/><polygon points="13,8 20.5,1.5 20.5,13 13,20" fill="#5aa9cc" stroke="#8fb9c8" stroke-width="0.9"/><polygon points="13,13.5 20.5,7 20.5,13 13,20" fill="#cfeaf6" opacity="0.85"/><rect x="1.5" y="8" width="11.5" height="12" fill="#f7f8f9" stroke="#a9b4ba" stroke-width="1"/></svg><svg class="i" style="left:63.5px;top:524.5px" width="9" height="9" viewBox="0 0 9 9"><g stroke="#e8e020" stroke-width="1.7"><path d="M4.5 0.5 V8.5 M0.5 4.5 H8.5 M1.6 1.6 L7.4 7.4 M7.4 1.6 L1.6 7.4"/></g></svg><div class="t" style="left:75px;top:524px;font-size:15px;color:#454a4d">拉伸 3</div><svg class="i" style="left:62.5px;top:546px" width="22" height="21" viewBox="0 0 22 21"><rect x="1" y="6" width="14.5" height="13.5" fill="#fbfbfb" stroke="#6a6d6f" stroke-width="1.3"/><path d="M4 16.5 L5.5 12 L16.5 1.5 L19.5 4 L8.5 15 Z" fill="#f1e6d8" stroke="#6a4a4a" stroke-width="1"/><path d="M16 2 L19 4.6 L20.5 3 Q19.5 0.8 17.5 0.8Z" fill="#c04a5a"/></svg><svg class="i" style="left:88.5px;top:548.5px" width="9" height="9" viewBox="0 0 9 9"><g stroke="#e8e020" stroke-width="1.7"><path d="M4.5 0.5 V8.5 M0.5 4.5 H8.5 M1.6 1.6 L7.4 7.4 M7.4 1.6 L1.6 7.4"/></g></svg><div class="t" style="left:100px;top:548px;font-size:15px;color:#454a4d">截面 1</div><div class="abs" style="left:0;top:945.6px;width:1512px;height:1.3px;background:#b4bcbd"></div><div class="abs" style="left:0;top:946.9px;width:1512px;height:5px;background:#f4f6f7"></div><div class="abs" style="left:301px;top:172px;width:354.5px;height:116.5px;background:#fbfcfc;border-right:1px solid #dfe2e4;border-bottom:1px solid #dfe2e4;box-sizing:border-box"></div><div class="abs" style="left:467.5px;top:181px;width:2.5px;height:2px;background:#c3c6c8"></div><div class="abs" style="left:473.5px;top:181px;width:2.5px;height:2px;background:#c3c6c8"></div><div class="abs" style="left:479.5px;top:181px;width:2.5px;height:2px;background:#c3c6c8"></div><div class="abs" style="left:485.5px;top:181px;width:2.5px;height:2px;background:#c3c6c8"></div><div class="t" style="left:316px;top:217px;font-size:15px;color:#454a4d">草绘</div><div class="abs" style="left:316px;top:244px;width:196px;height:26px;background:#eefbe0;border:1px solid #b7c4b0;box-sizing:border-box"></div><div class="t" style="left:324px;top:247px;font-size:15px;color:#2f3437">内部 截面 1</div><div class="abs" style="left:514px;top:242px;width:126px;height:29.5px;background:#f8f9f9;border:1px solid #b7babc;box-sizing:border-box"></div><div class="t" style="left:514.5px;width:125.5px;text-align:center;top:247px;font-size:15px;color:#3a4144">编辑...</div><div class="abs" style="left:850px;top:180.5px;width:518px;height:37px;background:#f5f7f8;border:1px solid #b4b7b9;box-sizing:border-box"></div><div class="abs" style="left:1207px;top:184.5px;width:29.5px;height:29px;background:#d8dadb;border:1px solid #c0c2c3;box-sizing:border-box"></div><svg class="i" style="left:857.6px;top:188.8px" width="23" height="22" viewBox="0 0 23 22"><rect x="0.8" y="1" width="18" height="17" fill="#f0f2f3" stroke="#b9bcbe" stroke-width="1.2"/><path d="M0.8 2 H18.8" stroke="#a9acae" stroke-width="1.6"/><line x1="13" y1="13" x2="19" y2="18.5" stroke="#b4b7b9" stroke-width="2.6" stroke-linecap="round"/><circle cx="9.5" cy="9.5" r="5.5" fill="#f4fbfd" stroke="#5f9aa8" stroke-width="1.3"/></svg><svg class="i" style="left:889px;top:188.8px" width="23" height="22" viewBox="0 0 23 22"><line x1="12" y1="12" x2="19" y2="19" stroke="#c9ccce" stroke-width="3.2" stroke-linecap="round"/><line x1="12" y1="12" x2="19" y2="19" stroke="#a4a7a9" stroke-width="1" /><circle cx="8" cy="8" r="6.3" fill="#eaf7fb" stroke="#3f9ab0" stroke-width="1.4"/><path d="M8 4.5 V11.5 M4.5 8 H11.5" stroke="#17607a" stroke-width="2.2"/></svg><svg class="i" style="left:921.1px;top:188.8px" width="23" height="22" viewBox="0 0 23 22"><line x1="12" y1="12" x2="19" y2="19" stroke="#c9ccce" stroke-width="3.2" stroke-linecap="round"/><line x1="12" y1="12" x2="19" y2="19" stroke="#a4a7a9" stroke-width="1" /><circle cx="8" cy="8" r="6.3" fill="#eaf7fb" stroke="#3f9ab0" stroke-width="1.4"/><path d="M4.5 8 H11.5" stroke="#17607a" stroke-width="2.2"/></svg><svg class="i" style="left:954px;top:188.8px" width="23" height="22" viewBox="0 0 23 22"><rect x="0.8" y="1" width="18.5" height="18" fill="#f7f9fa" stroke="#a9acae" stroke-width="1"/><path d="M0.8 2 H19.3" stroke="#9c9fa1" stroke-width="1.8"/><polygon points="19.3,3 19.3,19 5,19" fill="#8fc6d6"/><line x1="5.5" y1="18" x2="17.5" y2="6.5" stroke="#17607a" stroke-width="2.2" stroke-linecap="round"/></svg><svg class="i" style="left:986.1px;top:188.8px" width="23" height="22" viewBox="0 0 23 22"><defs><radialGradient id="sm1" cx="0.35" cy="0.35" r="0.7"><stop offset="0" stop-color="#fdfdfd"/><stop offset="0.6" stop-color="#9a9a9a"/><stop offset="1" stop-color="#5a5a5a"/></radialGradient></defs><path d="M17 1 Q18.5 6 15 10 Q12 11 10 14 Q6 11 12 7 Q15 5 17 1Z" fill="#7a7a7a"/><circle cx="6.5" cy="13.5" r="5.5" fill="url(#sm1)"/><path d="M9 9 Q13 9 15 4 Q17 9 12 14 Z" fill="#8a8a8a" opacity="0.8"/><polygon points="22,17 22,21.5 17.5,21.5" fill="#6a6d6f"/></svg><svg class="i" style="left:1017.6px;top:188.8px" width="23" height="22" viewBox="0 0 23 22"><polygon points="1,6 5.5,1.2 19,1.2 19,14 14.5,19 1,19" fill="#8fcbe4" stroke="#0f5f78" stroke-width="1.5" stroke-linejoin="round"/><rect x="1" y="6" width="13.5" height="13" fill="#fafdfe" stroke="#0f5f78" stroke-width="1.5"/><polygon points="22,17 22,21.5 17.5,21.5" fill="#6a6d6f"/></svg><svg class="i" style="left:1049.7px;top:188.8px" width="23" height="22" viewBox="0 0 23 22"><polygon points="1,8 6,1.5 14.5,1.5 19.5,8 19.5,14 12,19 4,16" fill="#cfeaf6" stroke="#8fb9cc" stroke-width="1"/><polygon points="14.5,1.5 19.5,8 19.5,14 14.5,10" fill="#3f9fd0"/><path d="M1 8 L8 11 L14.5 8 M8 11 V17.5" fill="none" stroke="#8fb9cc" stroke-width="1"/><rect x="14" y="12" width="5.5" height="7.5" fill="#f4f5f6" stroke="#6a6d6f" stroke-width="0.9"/><path d="M15.2 14 h3 M15.2 16 h3 M15.2 18 h3" stroke="#6a6d6f" stroke-width="0.8"/><polygon points="22,17 22,21.5 17.5,21.5" fill="#6a6d6f"/></svg><svg class="i" style="left:1081.9px;top:188.8px" width="23" height="22" viewBox="0 0 23 22"><g stroke="#b4b7b9" stroke-width="1.2" fill="#f7f8f9"><rect x="1" y="1" width="16" height="17"/><path d="M1 5 H17 M1 9 H17 M1 13 H17 M6.5 1 V18"/></g><rect x="7" y="10" width="13" height="9.5" rx="1.2" fill="#3a3c3e"/><rect x="10.5" y="8.3" width="5" height="2.5" fill="#3a3c3e"/><circle cx="13.5" cy="14.8" r="3" fill="#3a3c3e" stroke="#d5d7d8" stroke-width="1.2"/></svg><svg class="i" style="left:1113.6px;top:188.8px" width="23" height="22" viewBox="0 0 23 22"><polygon points="1,4.5 7,1 19.5,1.5 19.5,11 13,18 4,16.5" fill="#bfe3f2" stroke="#7fb4cc" stroke-width="1.1"/><polygon points="5,7 16,6 14.5,14.5 7,14.5" fill="#8fd0ea" stroke="#5fa4c0" stroke-width="1"/><path d="M1 4.5 L5 7 M19.5 1.5 L16 6 M13 18 L14.5 14.5 M4 16.5 L7 14.5" stroke="#7fb4cc" stroke-width="1"/></svg><svg class="i" style="left:1145.8px;top:188.8px" width="23" height="22" viewBox="0 0 23 22"><polygon points="1,6 6,2 18,2 18,14 13,18.5 1,18.5" fill="#dff1f8" stroke="#c3d8e0" stroke-width="1"/><polygon points="1,6 6,2 18,2 1,18.5" fill="#bfe3f2" opacity="0.8"/><path d="M4 18.5 H13 L18 14" fill="none" stroke="#a9acae" stroke-width="1" stroke-dasharray="1.5 1.5"/><line x1="1" y1="19" x2="19" y2="1" stroke="#17607a" stroke-width="1.9" stroke-linecap="round"/><polygon points="22,17 22,21.5 17.5,21.5" fill="#6a6d6f"/></svg><svg class="i" style="left:1177.2px;top:188.8px" width="23" height="22" viewBox="0 0 23 22"><g stroke="#8a6a1a" stroke-width="1.7" fill="none"><path d="M2 1.5 L6.5 6.5 M6.5 1.5 L2 6.5"/><path d="M11.5 1 L9.5 5 M8 8 L6 12 M11.5 15 L9.5 19 M4.5 15 L2.5 19"/></g><g stroke="#2e3032" stroke-width="1.4" fill="none"><path d="M13 8 V15.5 H20 M13 15.5 L9 19"/><path d="M11.3 10 L13 7.5 L14.7 10 M18 13.8 L20.3 15.5 L18 17.2"/></g><polygon points="22,17 22,21.5 17.5,21.5" fill="#6a6d6f"/></svg><svg class="i" style="left:1210.4px;top:188.8px" width="23" height="22" viewBox="0 0 23 22"><rect x="0.8" y="1" width="11" height="7" fill="#fbf7e4" stroke="#8a8d8f" stroke-width="1.1"/><path d="M11.8 4.5 H18 V11" fill="none" stroke="#2e3032" stroke-width="1.6"/><polygon points="15,8 21,8 18,12.5" fill="#2e3032"/><ellipse cx="14" cy="17" rx="5.2" ry="3.3" fill="#2e3032"/><circle cx="14" cy="17" r="1.7" fill="#e8eaeb"/><circle cx="14" cy="17" r="0.8" fill="#2e3032"/></svg><svg class="i" style="left:1242.6px;top:188.8px" width="23" height="22" viewBox="0 0 23 22"><path d="M5 4 L10 10.5 L17 8.5 M10 10.5 L4.5 17" fill="none" stroke="#2e3032" stroke-width="1.6"/><circle cx="4.5" cy="3.5" r="2.8" fill="#5cb86a" stroke="#3a8a4a" stroke-width="0.8"/><circle cx="17.5" cy="8.5" r="2.8" fill="#e8707a" stroke="#b84a55" stroke-width="0.8"/><circle cx="4" cy="17" r="2.8" fill="#3f9ac4" stroke="#2a7296" stroke-width="0.8"/></svg><svg class="i" style="left:1273.6px;top:188.8px" width="23" height="22" viewBox="0 0 23 22"><path d="M10 2 L18.5 16.5 H1.5 Z" fill="none" stroke="#c3c5c6" stroke-width="3" stroke-linejoin="round"/><path d="M10 8 L14 15 H6 Z" fill="#f4f6f7" stroke="#d2d4d5" stroke-width="1"/><polygon points="14.5,13.5 19.5,16.5 14.5,19.5" fill="#e4e6e7" stroke="#c3c5c6" stroke-width="0.9"/></svg><svg class="i" style="left:1305px;top:188.8px" width="23" height="22" viewBox="0 0 23 22"><rect x="4" y="2.5" width="4.5" height="14.5" fill="#c0c2c3"/><rect x="11.5" y="2.5" width="4.5" height="14.5" fill="#c0c2c3"/></svg><svg class="i" style="left:1337.9px;top:188.8px" width="23" height="22" viewBox="0 0 23 22"><defs><linearGradient id="dg1" x1="0" y1="0" x2="1" y2="0"><stop offset="0" stop-color="#b4b6b7"/><stop offset="1" stop-color="#e8eaeb"/></linearGradient></defs><path d="M1 3 H20 V16.5 H6 V13 H3 V7 H6 V5.5 H1Z" fill="url(#dg1)"/></svg><div class="abs" id="topstrip"></div><div class="abs" id="menubar"></div><div class="abs" id="filetab"></div><div class="mi" style="left:42px;color:#dff7cf">文件</div><div class="mi" style="left:128px">模型</div><div class="mi" style="left:220px">分析</div><div class="mi" style="left:327px">实时仿真</div><div class="mi" style="left:436px">注释</div><div class="mi" style="left:527px">工具</div><div class="mi" style="left:617px">视图</div><div class="mi" style="left:726px">柔性建模</div><div class="mi" style="left:851px">应用程序</div><div class="abs" id="acttab"></div><div class="mi" style="left:967px;color:#3f4547;font-style:italic">拉伸</div><div class="abs" id="ribbon"></div><div class="abs" id="tabstrip"></div><div class="vsep" style="left:68px;top:40px;height:131px"></div><div class="vsep" style="left:187px;top:45px;height:91px"></div><div class="vsep" style="left:386px;top:45px;height:91px"></div><div class="vsep" style="left:711px;top:40px;height:101px"></div><div class="vsep" style="left:953px;top:40px;height:101px"></div><div class="vsep" style="left:1087px;top:40px;height:131px;background:#b4b7b9"></div><div class="tab" style="left:300px;width:87px;background:#f7f9fa;color:#33393b">放置</div><div class="tab" style="left:389px;width:85px">选项</div><div class="tab" style="left:476px;width:117px">主体选项</div><div class="tab" style="left:595px;width:86px">属性</div><div class="abs" id="ribbonline"></div><div class="vsep" style="left:1510.5px;top:48px;height:112px"></div><div class="glabel" style="left:84px;top:44.3px">类型</div><div class="glabel" style="left:202px;top:44.3px">深度</div><div class="glabel" style="left:401px;top:44.3px">设置</div><svg class="i" style="left:13.5px;top:85px" width="41" height="40" viewBox="0 0 41 40"><defs><linearGradient id="bx1" x1="0" y1="0" x2="1" y2="1"><stop offset="0" stop-color="#d9eef8"/><stop offset="1" stop-color="#8fcbe8"/></linearGradient></defs><polygon points="2,16 17,2 39,2 23.5,16" fill="url(#bx1)" stroke="#9ccbe0" stroke-width="1"/><polygon points="17,2 39,2 39,23 23.5,16 17,16" fill="#7cc0e2" opacity="0.75"/><polygon points="23.5,16 39,2 39,23 23.5,38" fill="#6fb2d4" stroke="#8fc3dc" stroke-width="1"/><polygon points="23.5,24 39,12 39,23 23.5,38" fill="#cfe9f6" opacity="0.8"/><rect x="2" y="16" width="21.5" height="22" fill="#f4f5f6" stroke="#c9d3d8" stroke-width="1"/></svg><div class="abs" style="left:84px;top:67px;width:40px;height:70px;background:#ceeaf7;border-left:1px solid #a9d6ec;box-sizing:border-box"></div><div class="abs" style="left:84px;top:67px;width:40px;height:3px;background:#7fc0e4"></div><div class="abs" style="left:125px;top:67px;width:40px;height:3px;background:#b4b7b9"></div><svg class="i" style="left:95px;top:75px" width="19" height="18" viewBox="0 0 19 18"><polygon points="1.5,5 5,1.5 17,1.5 17,13 13.5,16.5 1.5,16.5" fill="#9fd0e6" stroke="#4f98b0" stroke-width="1.2" stroke-linejoin="round"/><rect x="1.5" y="5" width="12" height="11.5" rx="1.5" fill="#f8fcfe" stroke="#4f98b0" stroke-width="1.2"/></svg><div class="t" style="left:89px;top:97px;font-size:15px;color:#2f3a3e">实体</div><svg class="i" style="left:134px;top:75px" width="22" height="19" viewBox="0 0 22 19"><defs><linearGradient id="sf1" x1="0" y1="0" x2="1" y2="0"><stop offset="0" stop-color="#e8f4fa"/><stop offset="0.7" stop-color="#bfe2f2"/><stop offset="1" stop-color="#a6d6ec"/></linearGradient></defs><path d="M1.5,4 Q10.5,-1 20.5,4 L20.5,16.5 Q10.5,11.5 1.5,16.5 Z" fill="url(#sf1)" stroke="#a9b9c2" stroke-width="1.2" stroke-linejoin="round"/></svg><div class="t" style="left:130px;top:97px;font-size:15px;color:#2f3a3e">曲面</div><div class="abs" style="left:202px;top:67px;width:163px;height:27px;background:#fff;border:1px solid #a9acae;box-sizing:border-box"></div><div class="abs" style="left:230px;top:68px;width:1px;height:25px;background:#c3c6c8"></div><div class="abs" style="left:336px;top:68px;width:1px;height:25px;background:#b4b7b9"></div><div class="abs" style="left:337px;top:68px;width:27px;height:25px;background:#f7f9fa"></div><svg class="i" style="left:202px;top:67px" width="29" height="27" viewBox="0 0 29 27"><line x1="3" y1="11" x2="23" y2="11" stroke="#b9bcbe" stroke-width="1.3"/><line x1="3" y1="15" x2="23" y2="15" stroke="#b9bcbe" stroke-width="1.3"/><path d="M8.5 5.5 V18.5 H17.5 V5.5" fill="none" stroke="#2f86b0" stroke-width="1.8"/><line x1="3" y1="18.8" x2="23" y2="18.8" stroke="#2f86b0" stroke-width="1.4"/><line x1="3" y1="22.5" x2="23" y2="22.5" stroke="#2c3a40" stroke-width="2"/><polygon points="28,22 28,27 23,27" fill="#6a6d6f"/></svg><div class="t" style="left:235px;top:71.5px;font-size:15.5px;color:#3f4547">8.00</div><svg class="i" style="left:323px;top:78px" width="10" height="6" viewBox="0 0 10 6"><polygon points="0.5,0.5 9.5,0.5 5,5.5" fill="#6a6d6f"/></svg><svg class="i" style="left:337px;top:67px" width="28" height="27" viewBox="0 0 28 27"><line x1="4" y1="23" x2="23" y2="4.5" stroke="#1f6f85" stroke-width="2.6" stroke-linecap="round"/><path d="M4 5 L10 5 L8.2 6.8 L11.5 10 L10 11.5 L6.8 8.2 L5 10 Z" fill="#c2c5c7"/><path d="M24 24 L17 24 L19.2 21.8 L15.6 18.2 L18.2 15.6 L21.8 19.2 L24 17 Z" fill="#4a4d4f"/></svg><svg class="i" style="left:207.5px;top:104px" width="19" height="17" viewBox="0 0 19 17"><polygon points="1,5 5,1.5 17.5,1.5 17.5,12 13.5,15.5 1,15.5" fill="#e4e6e7" stroke="#d0d3d5" stroke-width="1"/><rect x="1" y="5" width="12.5" height="10.5" rx="1.5" fill="#eceeef" stroke="#d0d3d5" stroke-width="1"/></svg><div class="t" style="left:232px;top:103.5px;font-size:15px;color:#c6c9cb">封闭端</div><div class="abs" style="left:401px;top:67px;width:94px;height:29px;background:#dfe1e2;border:1px solid #b7babc;box-sizing:border-box"></div><div class="abs" style="left:494px;top:67px;width:30px;height:29px;background:#f7f9fa;border:1px solid #b7babc;box-sizing:border-box"></div><svg class="i" style="left:402px;top:69px" width="22" height="22" viewBox="0 0 22 22"><polygon points="3.5,18.5 3.5,12 12.5,3.5 18.5,3.5 18.5,18.5" fill="#bfe6f7" stroke="#6ab5d5" stroke-width="1.2"/><line x1="1.5" y1="15.5" x2="15" y2="2" stroke="#2f6f88" stroke-width="1.8" stroke-linecap="round"/></svg><div class="t" style="left:430px;top:71px;font-size:15px;color:#3a4144">移除材料</div><svg class="i" style="left:495px;top:68px" width="28" height="27" viewBox="0 0 28 27"><line x1="4" y1="23" x2="23" y2="4.5" stroke="#1f6f85" stroke-width="2.6" stroke-linecap="round"/><path d="M4 5 L10 5 L8.2 6.8 L11.5 10 L10 11.5 L6.8 8.2 L5 10 Z" fill="#c2c5c7"/><path d="M24 24 L17 24 L19.2 21.8 L15.6 18.2 L18.2 15.6 L21.8 19.2 L24 17 Z" fill="#4a4d4f"/></svg><svg class="i" style="left:407.5px;top:106px" width="17" height="16" viewBox="0 0 17 16"><path d="M15.5 1.5 H1.5 V14.5 H15.5" fill="none" stroke="#4a8a96" stroke-width="1.6"/></svg><div class="t" style="left:431px;top:105px;font-size:15px;color:#3a4144">加厚草绘</div><div class="abs" style="left:739px;top:76px;width:10.5px;height:26px;background:#3d3f41"></div><div class="abs" style="left:756.5px;top:76px;width:10.5px;height:26px;background:#3d3f41"></div><svg class="i" style="left:787.4px;top:80.1px" width="18" height="18" viewBox="0 0 18 18"><circle cx="9" cy="9" r="6.5" fill="none" stroke="#55585a" stroke-width="2.2"/><line x1="4.4" y1="4.6" x2="13.6" y2="13.4" stroke="#55585a" stroke-width="2.2"/></svg><svg class="i" style="left:818px;top:76px" width="25" height="26" viewBox="0 0 25 26"><g fill="none" stroke="#6a6d6f" stroke-width="1"><polygon points="4,8 12,4 20,8 20,19 12,23 4,19"/><path d="M4 8 L12 12 L20 8 M12 12 V23"/><path d="M2 5 L7 10 M22 5 L17 10 M2 22 L6 18 M22 22 L18 18 M2 5 Q0 13 2 22 M22 5 Q25 13 22 22" stroke="#8a8d8f"/></g></svg><div class="abs" style="left:849px;top:72px;width:35px;height:35px;background:#dcdedf;border:1px solid #c3c5c6;box-sizing:border-box"></div><svg class="i" style="left:853px;top:81px" width="27" height="17" viewBox="0 0 27 17"><polygon points="1,3 13,3 13,9 7,16 1,9" fill="#f4fbfe"/><polygon points="1,3 7,8 7,16 1,10" fill="#bfe6f6"/><polygon points="7,8 13,3 13,10 7,16" fill="#2d9fd6"/><polygon points="14,3 26,3 26,9 20,16 14,9" fill="#f4fbfe"/><polygon points="14,3 20,8 20,16 14,10" fill="#bfe6f6"/><polygon points="20,8 26,3 26,10 20,16" fill="#2d9fd6"/><polygon points="1,3 7,0.5 13,3 7,8" fill="#fff"/><polygon points="14,3 20,0.5 26,3 20,8" fill="#fff"/></svg><svg class="i" style="left:893px;top:82px" width="36" height="20" viewBox="0 0 36 20"><defs><linearGradient id="gl1" x1="0" y1="0" x2="0" y2="1"><stop offset="0" stop-color="#dfe6ea"/><stop offset="1" stop-color="#fbfcfd"/></linearGradient></defs><g fill="none" stroke="#5f6264" stroke-width="1.7" stroke-linecap="round" stroke-linejoin="round"><ellipse cx="8.7" cy="13.4" rx="5.9" ry="5" fill="url(#gl1)"/><ellipse cx="26.7" cy="13.4" rx="5.9" ry="5" fill="url(#gl1)"/><path d="M14.4 11.6 Q17.7 9.4 21 11.6 M4.2 9.8 L13 2.4 L17.6 6 M33 2.4 L33.4 14"/></g></svg><div class="abs" style="left:971px;top:54px;width:50px;height:72px;background:#9cdcf9;border:1px solid #8fd0ee;box-sizing:border-box"></div><svg class="i" style="left:978px;top:67px" width="38" height="26" viewBox="0 0 38 26"><defs><linearGradient id="ck" x1="0" y1="0" x2="0" y2="1"><stop offset="0" stop-color="#5cb85c"/><stop offset="1" stop-color="#2f8a3c"/></linearGradient></defs><path d="M0.9 13.5 L6.6 10.7 L13.7 17.8 L30.7 0.7 L37.3 2.1 L13.2 24.9 Z" fill="url(#ck)" stroke="#2a7a38" stroke-width="0.7" stroke-linejoin="round"/><path d="M0.9 13.5 L6.6 10.7 L13.7 17.8 L30.7 0.7 L37.3 2.1" fill="none" stroke="#8fdc7a" stroke-width="1" stroke-linejoin="round" opacity="0.8"/></svg><div class="t" style="left:981px;top:102px;font-size:15px;color:#1f4a66">确定</div><svg class="i" style="left:1033.1px;top:71.5px" width="25" height="19" viewBox="0 0 25 19"><polygon points="0,0 5.8,0 12.15,6.6 18.5,0 24.3,0 15.1,9.25 24.3,18.5 18.5,18.5 12.15,11.9 5.8,18.5 0,18.5 9.2,9.25" fill="#444648"/></svg><div class="t" style="left:1031px;top:102px;font-size:15px;color:#3a4144">取消</div><div class="badge" style="left:103.5px;top:128.5px">1</div><div class="badge" style="left:246px;top:89.7px">2</div>
</body></html>
